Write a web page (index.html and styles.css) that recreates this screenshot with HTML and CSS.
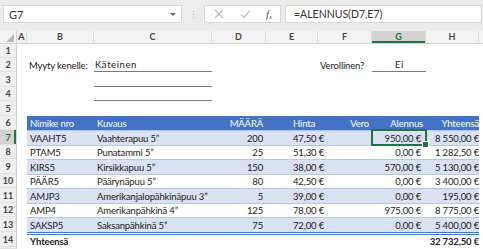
FILE: index.html
```html
<!DOCTYPE html>
<html>
<head>
<meta charset="utf-8">
<link rel="stylesheet" href="styles.css">
</head>
<body>
<div class="toolbar">
  <div class="namebox"><span class="nb-text">G7</span><span class="caret"></span></div>
  <div class="dots"><i></i><i></i><i></i></div>
  <div class="fxbox">
    <svg class="ico" width="10" height="10" viewBox="0 0 10 10"><path d="M1 1 L9 9 M9 1 L1 9" stroke="#b9b9b9" stroke-width="1.2" fill="none"/></svg>
    <svg class="ico" width="11" height="10" viewBox="0 0 11 10"><path d="M1 5.5 L4 8.5 L10 1.5" stroke="#c4c4c4" stroke-width="1.2" fill="none"/></svg>
    <span class="fx">f<sub>x</sub></span>
  </div>
  <div class="formula">=ALENNUS(D7,E7)</div>
</div>
<div class="sheet">
  <div class="row colhdr">
    <div class="corner"></div>
    <div class="ch">A</div><div class="ch">B</div><div class="ch">C</div><div class="ch">D</div>
    <div class="ch">E</div><div class="ch">F</div><div class="ch sel">G</div><div class="ch">H</div><div class="ch last"></div>
  </div>
  <div class="row h14"><div class="rh">1</div></div>
  <div class="row h14">
    <div class="rh">2</div><div></div>
    <div class="c pad">Myyty kenelle:</div>
    <div class="c line spaced">Käteinen</div>
    <div></div><div></div>
    <div class="c pad">Verollinen?</div>
    <div class="c line spaced center">Ei</div>
  </div>
  <div class="row h15"><div class="rh">3</div><div></div><div></div><div class="c line"></div></div>
  <div class="row h14"><div class="rh">4</div><div></div><div></div><div class="c line"></div></div>
  <div class="row h15"><div class="rh">5</div></div>
  <div class="row h14 thead">
    <div class="rh">6</div><div></div>
    <div class="t">Nimike nro</div><div class="t">Kuvaus</div><div class="t r">MÄÄRÄ</div>
    <div class="t e">Hinta</div><div class="t r">Vero</div><div class="t r">Alennus</div><div class="t r0">Yhteensä</div>
  </div>
  <div class="row h15 band cur">
    <div class="rh selr">7</div><div></div>
    <div class="t">VAAHT5</div><div class="t">Vaahterapuu 5”</div><div class="t r">200</div>
    <div class="t e">47,50 €</div><div class="t"></div><div class="t rg active">950,00 €<span class="handle"></span></div><div class="t r0">8 550,00 €</div>
  </div>
  <div class="row h14 plain">
    <div class="rh">8</div><div></div>
    <div class="t">PTAM5</div><div class="t">Punatammi 5”</div><div class="t r">25</div>
    <div class="t e">51,30 €</div><div class="t"></div><div class="t rg">0,00 €</div><div class="t r0">1 282,50 €</div>
  </div>
  <div class="row h15 band">
    <div class="rh">9</div><div></div>
    <div class="t">KIRS5</div><div class="t">Kirsikkapuu 5”</div><div class="t r">150</div>
    <div class="t e">38,00 €</div><div class="t"></div><div class="t rg">570,00 €</div><div class="t r0">5 130,00 €</div>
  </div>
  <div class="row h14 plain">
    <div class="rh">10</div><div></div>
    <div class="t">PÄÄR5</div><div class="t">Päärynäpuu 5”</div><div class="t r">80</div>
    <div class="t e">42,50 €</div><div class="t"></div><div class="t rg">0,00 €</div><div class="t r0">3 400,00 €</div>
  </div>
  <div class="row h15 band">
    <div class="rh">11</div><div></div>
    <div class="t">AMJP3</div><div class="t">Amerikanjalopähkinäpuu 3”</div><div class="t r">5</div>
    <div class="t e">39,00 €</div><div class="t"></div><div class="t rg">0,00 €</div><div class="t r0">195,00 €</div>
  </div>
  <div class="row h14 plain">
    <div class="rh">12</div><div></div>
    <div class="t">AMP4</div><div class="t">Amerikanpähkinä 4”</div><div class="t r">125</div>
    <div class="t e">78,00 €</div><div class="t"></div><div class="t rg">975,00 €</div><div class="t r0">8 775,00 €</div>
  </div>
  <div class="row h15 band">
    <div class="rh">13</div><div></div>
    <div class="t">SAKSP5</div><div class="t">Saksanpähkinä 5”</div><div class="t r">75</div>
    <div class="t e">72,00 €</div><div class="t"></div><div class="t rg">0,00 €</div><div class="t r0">5 400,00 €</div>
  </div>
  <div class="row h15 total">
    <div class="rh">14</div><div></div>
    <div class="t b">Yhteensä</div><div class="t"></div><div class="t"></div>
    <div class="t"></div><div class="t"></div><div class="t"></div><div class="t r0 b">32 732,50 €</div>
  </div>
  <div class="row h2"><div class="rh"></div></div>
</div>
</body>
</html>
```
FILE: styles.css
```css
html, body {
  margin: 0;
  padding: 0;
  background: #ffffff;
  overflow: hidden;
  width: 483px;
  height: 249px;
}
body {
  font-family: Lato, "Liberation Sans", sans-serif;
  font-size: 9.5px;
  letter-spacing: -0.15px;
  color: #1a1a1a;
}
.toolbar {
  height: 31px;
  background: #ececec;
  display: flex;
  align-items: flex-start;
  padding-top: 5px;
  box-sizing: border-box;
  letter-spacing: 0;
}
.namebox {
  margin-left: 3px;
  width: 179px;
  height: 18px;
  background: #fff;
  border: 1px solid #d6d6d6;
  box-sizing: border-box;
  display: flex;
  align-items: center;
  justify-content: space-between;
  padding: 0 5px 0 5px;
  font-size: 11px;
  color: #333;
}
.caret {
  width: 0;
  height: 0;
  border-left: 3px solid transparent;
  border-right: 3px solid transparent;
  border-top: 3px solid #666;
}
.dots {
  width: 22px;
  height: 18px;
  display: flex;
  flex-direction: column;
  align-items: center;
  justify-content: center;
  gap: 2px;
}
.dots i {
  width: 1px;
  height: 1px;
  background: #b0b0b0;
}
.fxbox {
  width: 77px;
  height: 18px;
  background: #fff;
  border: 1px solid #d6d6d6;
  box-sizing: border-box;
  display: flex;
  align-items: center;
  padding-left: 9px;
  gap: 16px;
}
.fx {
  font-family: "Liberation Serif", serif;
  font-style: italic;
  font-size: 11px;
  color: #555;
  margin-left: -1px;
}
.fx sub {
  font-size: 7px;
  vertical-align: -1px;
}
.formula {
  margin-left: 4px;
  width: 197px;
  height: 18px;
  background: #fff;
  border: 1px solid #d6d6d6;
  box-sizing: border-box;
  display: flex;
  align-items: center;
  padding-left: 8px;
  font-size: 10.5px;
  color: #333;
}
.sheet {
  display: flex;
  flex-direction: column;
}
.row {
  display: grid;
  grid-template-columns: 17px 10px 67px 118px 54px 52px 54px 54px 53px 1fr;
}
.h14 { height: 14px; }
.h15 { height: 15px; }
.h2 { height: 2px; }
.colhdr {
  height: 13px;
  background: #f3f3f3;
  border-bottom: 1px solid #d4d4d4;
  box-sizing: border-box;
}
.corner {
  position: relative;
  border-right: 1px solid #d4d4d4;
}
.corner::after {
  content: "";
  position: absolute;
  right: 2px;
  bottom: 1px;
  width: 0;
  height: 0;
  border-left: 8px solid transparent;
  border-bottom: 8px solid #b9b9b9;
}
.ch {
  font-size: 9px;
  font-weight: 700;
  color: #444;
  text-align: center;
  line-height: 12px;
  border-right: 1px solid #dcdcdc;
  letter-spacing: 0;
}
.ch.last { border-right: none; }
.ch.sel {
  background: #d3d3d3;
  color: #217346;
  box-shadow: inset 0 -2px 0 #217346;
}
.rh {
  background: #f0f0f0;
  border-right: 1px solid #d4d4d4;
  border-bottom: 1px solid #e2e2e2;
  box-sizing: border-box;
  font-size: 9px;
  font-weight: 700;
  color: #444;
  text-align: center;
  display: flex;
  align-items: center;
  justify-content: center;
  letter-spacing: 0;
}
.rh.selr {
  background: #d3d3d3;
  color: #217346;
  box-shadow: inset -2px 0 0 #217346;
}
.c {
  white-space: nowrap;
  display: flex;
  align-items: flex-end;
  padding-bottom: 1px;
  box-sizing: border-box;
}
.pad { padding-left: 2px; }
.line {
  border-bottom: 1px solid #7a7a7a;
  padding-left: 1px;
}
.spaced { letter-spacing: 0.6px; }
.center { justify-content: center; }
.t {
  white-space: nowrap;
  display: flex;
  align-items: center;
  padding: 0 3px;
  box-sizing: border-box;
  position: relative;
}
.t.r { justify-content: flex-end; }
.t.rg { justify-content: flex-end; padding-right: 5px; }
.t.r0 { justify-content: flex-end; padding-right: 0; }
.t.e { padding-left: 27px; overflow: visible; z-index: 1; }
.thead .t {
  background: #4472c4;
  color: #ffffff;
}
.band .t {
  background: #d9e1f2;
  border-top: 1px solid #b4c6e7;
}
.plain .t {
  background: #ffffff;
  border-top: 1px solid #b4c6e7;
}
.total .t {
  border-top: 3px double #4472c4;
  background: #fff;
}
.b { font-weight: 700; }
.active {
  outline: 2px solid #217346;
  outline-offset: -1px;
  z-index: 2;
}
.handle {
  position: absolute;
  right: -3px;
  bottom: -3px;
  width: 5px;
  height: 5px;
  background: #217346;
  border: 1px solid #fff;
}
```
